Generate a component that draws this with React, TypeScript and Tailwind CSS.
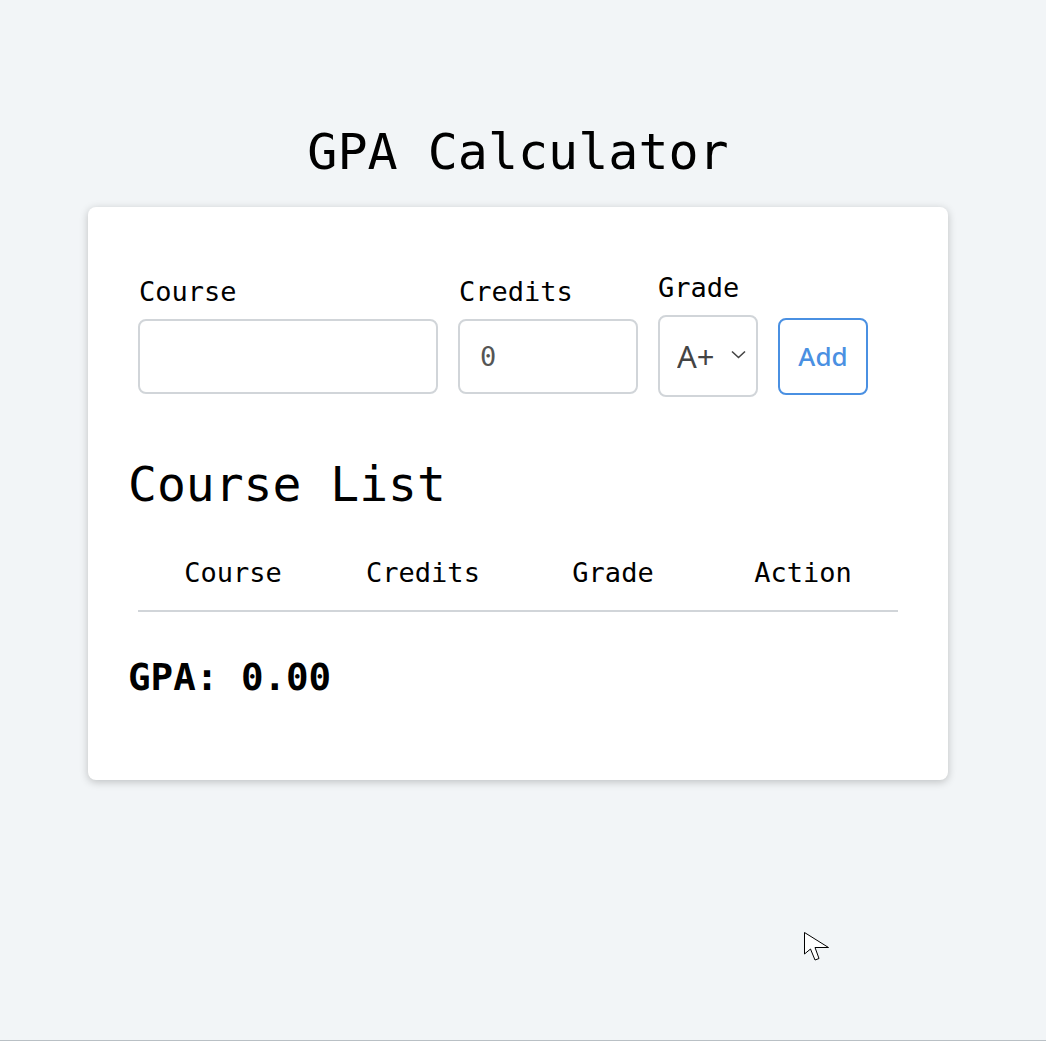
import { useState } from "react"

type Course = { name: string; credits: number; grade: string }

const GRADES = ["A+", "A", "A-", "B+", "B", "B-", "C+", "C", "C-", "D", "F"]

const GRADE_POINTS: Record<string, number> = {
  "A+": 4.0,
  A: 4.0,
  "A-": 3.7,
  "B+": 3.3,
  B: 3.0,
  "B-": 2.7,
  "C+": 2.3,
  C: 2.0,
  "C-": 1.7,
  D: 1.0,
  F: 0,
}

const mono = "font-['DejaVu_Sans_Mono',monospace]"
const sans = "font-['Noto_Sans',sans-serif]"

export default function App() {
  const [courses, setCourses] = useState<Course[]>([])
  const [name, setName] = useState("")
  const [credits, setCredits] = useState(0)
  const [grade, setGrade] = useState("A+")

  const totalCredits = courses.reduce((s, c) => s + c.credits, 0)
  const gpa = totalCredits
    ? courses.reduce((s, c) => s + c.credits * GRADE_POINTS[c.grade], 0) / totalCredits
    : 0

  function addCourse() {
    if (!name) return
    setCourses([...courses, { name, credits, grade }])
    setName("")
    setCredits(0)
  }

  return (
    <div className={`relative min-h-[1041px] border-b border-[#b9c0c5] bg-[#f2f5f7] ${mono} text-black`}>
      <div className="flex flex-col items-center pt-[122px] pr-[10px]">
        <h1 className="text-[50px] leading-[60px] font-normal">GPA Calculator</h1>

        <div className="mt-[25px] w-[860px] rounded-lg bg-white px-10 pt-[65px] pb-[81px] shadow-[0_2px_8px_rgba(0,0,0,0.22)]">
          <div className="flex items-center gap-5 px-[10px]">
            <div className="flex flex-col gap-3">
              <label className="pl-[1px] text-[27px] leading-[31px]">Course</label>
              <input
                value={name}
                onChange={(e) => setName(e.target.value)}
                className="h-[75px] w-[300px] rounded-lg border-2 border-[#d1d5d9] bg-white px-5 text-[27px] text-[#555] outline-none"
              />
            </div>
            <div className="flex flex-col gap-3">
              <label className="pl-[1px] text-[27px] leading-[31px]">Credits</label>
              <input
                type="number"
                value={credits}
                onChange={(e) => setCredits(Number(e.target.value))}
                className="h-[75px] w-[180px] appearance-none rounded-lg border-2 border-[#d1d5d9] bg-white px-5 text-[27px] text-[#555] outline-none [&::-webkit-inner-spin-button]:appearance-none"
              />
            </div>
            <div className="flex flex-col gap-3">
              <label className="text-[27px] leading-[31px]">Grade</label>
              <div className="relative h-[82px] w-[100px]">
                <select
                  value={grade}
                  onChange={(e) => setGrade(e.target.value)}
                  className={`h-full w-full appearance-none rounded-lg border-2 border-[#d1d5d9] bg-white pl-[17px] ${sans} text-[31px] text-[#444] outline-none`}
                >
                  {GRADES.map((g) => (
                    <option key={g} value={g}>
                      {g}
                    </option>
                  ))}
                </select>
                <svg
                  className="pointer-events-none absolute top-[35px] right-[12px]"
                  width="15"
                  height="9"
                  viewBox="0 0 15 9"
                  fill="none"
                  stroke="#444"
                  strokeWidth="1.6"
                >
                  <path d="M1 1.5l6.5 6 6.5-6" />
                </svg>
              </div>
            </div>
            <button
              onClick={addCourse}
              className={`mt-[44px] h-[77px] w-[90px] rounded-lg border-2 border-[#4a90e2] bg-white ${sans} text-[26px] font-medium text-[#4a90e2]`}
            >
              Add
            </button>
          </div>

          <h2 className="mt-[59px] text-[48px] leading-[56px] font-normal">Course List</h2>

          <table className="mx-[10px] mt-[25px] w-[760px] table-fixed border-collapse">
            <thead>
              <tr className="border-b-2 border-[#d1d5d9]">
                {["Course", "Credits", "Grade", "Action"].map((h) => (
                  <th key={h} className="pt-5 pb-[22px] text-center text-[27px] leading-[31px] font-normal">
                    {h}
                  </th>
                ))}
              </tr>
            </thead>
            <tbody>
              {courses.map((c, i) => (
                <tr key={i} className="border-b border-[#e5e7eb]">
                  <td className="py-3 text-center text-[22px]">{c.name}</td>
                  <td className="py-3 text-center text-[22px]">{c.credits}</td>
                  <td className="py-3 text-center text-[22px]">{c.grade}</td>
                  <td className="py-3 text-center">
                    <button
                      onClick={() => setCourses(courses.filter((_, j) => j !== i))}
                      className={`${sans} text-[20px] text-[#e24a4a]`}
                    >
                      Remove
                    </button>
                  </td>
                </tr>
              ))}
            </tbody>
          </table>

          <div className="mt-[44px] text-[37.5px] leading-[43px] font-bold">GPA: {gpa.toFixed(2)}</div>
        </div>
      </div>

      <svg
        className="pointer-events-none absolute top-[932px] left-[804px]"
        width="26"
        height="38"
        viewBox="0 0 26 38"
      >
        <path
          d="M0.5 0.5 L0.5 22 L6.5 17 L11 28 L15 26.5 L11 15.5 L24.5 15.5 Z"
          fill="#fff"
          stroke="#000"
          strokeWidth="1"
          strokeLinejoin="round"
        />
      </svg>
    </div>
  )
}
